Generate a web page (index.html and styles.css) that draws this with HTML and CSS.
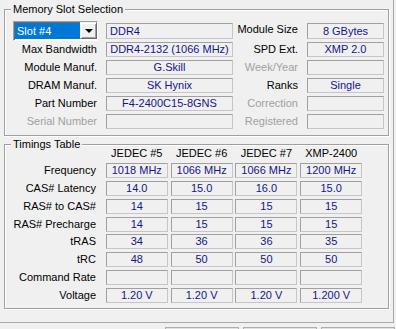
FILE: index.html
```html
<!DOCTYPE html>
<html lang="en">
<head>
  <meta charset="UTF-8">
  <title>SPD</title>
  <link rel="stylesheet" href="styles.css">
</head>
<body>
  <div class="tab-page">
    <div class="group slot-group">
      <div class="group-title">Memory Slot Selection</div>

      <div class="combo">
        <div class="combo-value">Slot #4</div>
        <div class="combo-btn"><span class="arrow"></span></div>
      </div>
      <div class="field tall left">DDR4</div>
      <div class="label">Module Size</div>
      <div class="field tall">8 GBytes</div>

      <div class="label">Max Bandwidth</div>
      <div class="field">DDR4-2132 (1066 MHz)</div>
      <div class="label">SPD Ext.</div>
      <div class="field">XMP 2.0</div>

      <div class="label">Module Manuf.</div>
      <div class="field">G.Skill</div>
      <div class="label dim">Week/Year</div>
      <div class="field"></div>

      <div class="label">DRAM Manuf.</div>
      <div class="field">SK Hynix</div>
      <div class="label">Ranks</div>
      <div class="field">Single</div>

      <div class="label">Part Number</div>
      <div class="field">F4-2400C15-8GNS</div>
      <div class="label dim">Correction</div>
      <div class="field"></div>

      <div class="label dim">Serial Number</div>
      <div class="field"></div>
      <div class="label dim">Registered</div>
      <div class="field"></div>
    </div>

    <div class="group timings-group">
      <div class="group-title">Timings Table</div>

      <div></div>
      <div class="col-head">JEDEC #5</div>
      <div class="col-head">JEDEC #6</div>
      <div class="col-head">JEDEC #7</div>
      <div class="col-head">XMP-2400</div>

      <div class="label">Frequency</div>
      <div class="field">1018 MHz</div>
      <div class="field">1066 MHz</div>
      <div class="field">1066 MHz</div>
      <div class="field">1200 MHz</div>

      <div class="label">CAS# Latency</div>
      <div class="field">14.0</div>
      <div class="field">15.0</div>
      <div class="field">16.0</div>
      <div class="field">15.0</div>

      <div class="label">RAS# to CAS#</div>
      <div class="field">14</div>
      <div class="field">15</div>
      <div class="field">15</div>
      <div class="field">15</div>

      <div class="label">RAS# Precharge</div>
      <div class="field">14</div>
      <div class="field">15</div>
      <div class="field">15</div>
      <div class="field">15</div>

      <div class="label">tRAS</div>
      <div class="field">34</div>
      <div class="field">36</div>
      <div class="field">36</div>
      <div class="field">35</div>

      <div class="label">tRC</div>
      <div class="field">48</div>
      <div class="field">50</div>
      <div class="field">50</div>
      <div class="field">50</div>

      <div class="label">Command Rate</div>
      <div class="field"></div>
      <div class="field"></div>
      <div class="field"></div>
      <div class="field"></div>

      <div class="label">Voltage</div>
      <div class="field">1.20 V</div>
      <div class="field">1.20 V</div>
      <div class="field">1.20 V</div>
      <div class="field">1.200 V</div>
    </div>
  </div>

  <!-- only the top edges of the window buttons show -->
  <div class="footer">
    <div class="btn"></div>
    <div class="btn"></div>
    <div class="btn"></div>
  </div>
</body>
</html>
```

FILE: styles.css
```css
html, body {
  margin: 0;
  padding: 0;
}
body {
  width: 396px;
  height: 329px;
  overflow: hidden;
  background-color: #f0f0f0;
  font-family: "Liberation Sans", Arial, sans-serif;
  font-size: 11px;
  color: #000000;
}

/* tab sheet, only right and bottom edges are on screen */
.tab-page {
  box-sizing: border-box;
  width: 394px;
  height: 323px;
  padding: 9px 0 0 4px;
  border-right: 1px solid #a9a9a9;
  border-bottom: 1px solid #a9a9a9;
}

.group {
  position: relative;
  box-sizing: border-box;
  width: 385px;
  border: 1px solid #a0a0a0;
  box-shadow: inset 1px 1px 0 #ffffff, 1px 1px 0 #ffffff;
}
.group-title {
  position: absolute;
  top: -7px;
  left: 6px;
  padding: 0 2px;
  line-height: 12px;
  background-color: #f0f0f0;
}

.slot-group {
  display: grid;
  grid-template-columns: 101px 127px 74px 77px;
  grid-template-rows: 19px repeat(5, 15px);
  row-gap: 3px;
  padding: 10px 0 6px 0;
}
.timings-group {
  display: grid;
  grid-template-columns: 98px repeat(4, 62px);
  grid-template-rows: 13.5px repeat(8, 15px);
  column-gap: 2.8px;
  row-gap: 2.75px;
  margin-top: 8px;
  padding: 2px 0 5.5px 0;
}

.label {
  align-self: center;
  padding-right: 9px;
  line-height: 15px;
  text-align: right;
  white-space: nowrap;
}
.timings-group .label {
  padding-right: 7px;
}
.label.dim {
  color: #a0a0a0;
}

.field {
  box-sizing: border-box;
  height: 15px;
  border: 1px solid;
  border-color: #a0a0a0 #c6c6c6 #c6c6c6 #a0a0a0;
  color: #14148e;
  line-height: 13px;
  text-align: center;
  white-space: nowrap;
  overflow: hidden;
}
.field.tall {
  align-self: end;
  height: 16px;
  line-height: 14px;
}
.field.left {
  padding-left: 3px;
  text-align: left;
}

.col-head {
  line-height: 13.5px;
  text-align: center;
  white-space: nowrap;
}

/* slot drop down */
.combo {
  display: flex;
  box-sizing: border-box;
  width: 85px;
  height: 20px;
  margin: 1px 0 0 8px;
  padding: 1px 0 1px 1px;
  border: 1px solid;
  border-color: #a0a0a0 #ffffff #ffffff #a0a0a0;
  box-shadow: inset 1px 1px 0 #696969;
  background-color: #ffffff;
}
.combo-value {
  flex: 1;
  padding-left: 2px;
  line-height: 16px;
  color: #ffffff;
  background-color: #0078d7;
}
.combo-btn {
  display: flex;
  align-items: center;
  justify-content: center;
  box-sizing: border-box;
  width: 17px;
  margin-top: -1px;
  border: 1px solid;
  border-color: #f0f0f0 #696969 #696969 #f0f0f0;
  box-shadow: inset 1px 1px 0 #ffffff, inset -1px -1px 0 #a0a0a0;
  background-color: #f0f0f0;
}
.arrow {
  width: 0;
  height: 0;
  border-left: 4px solid transparent;
  border-right: 4px solid transparent;
  border-top: 4px solid #000000;
}

/* bottom buttons, mostly below the window edge */
.footer {
  display: flex;
  gap: 4px;
  margin-top: 4px;
  padding-left: 165px;
}
.btn {
  box-sizing: border-box;
  width: 74px;
  height: 23px;
  border: 1px solid #adadad;
  background-color: #e1e1e1;
}
```
